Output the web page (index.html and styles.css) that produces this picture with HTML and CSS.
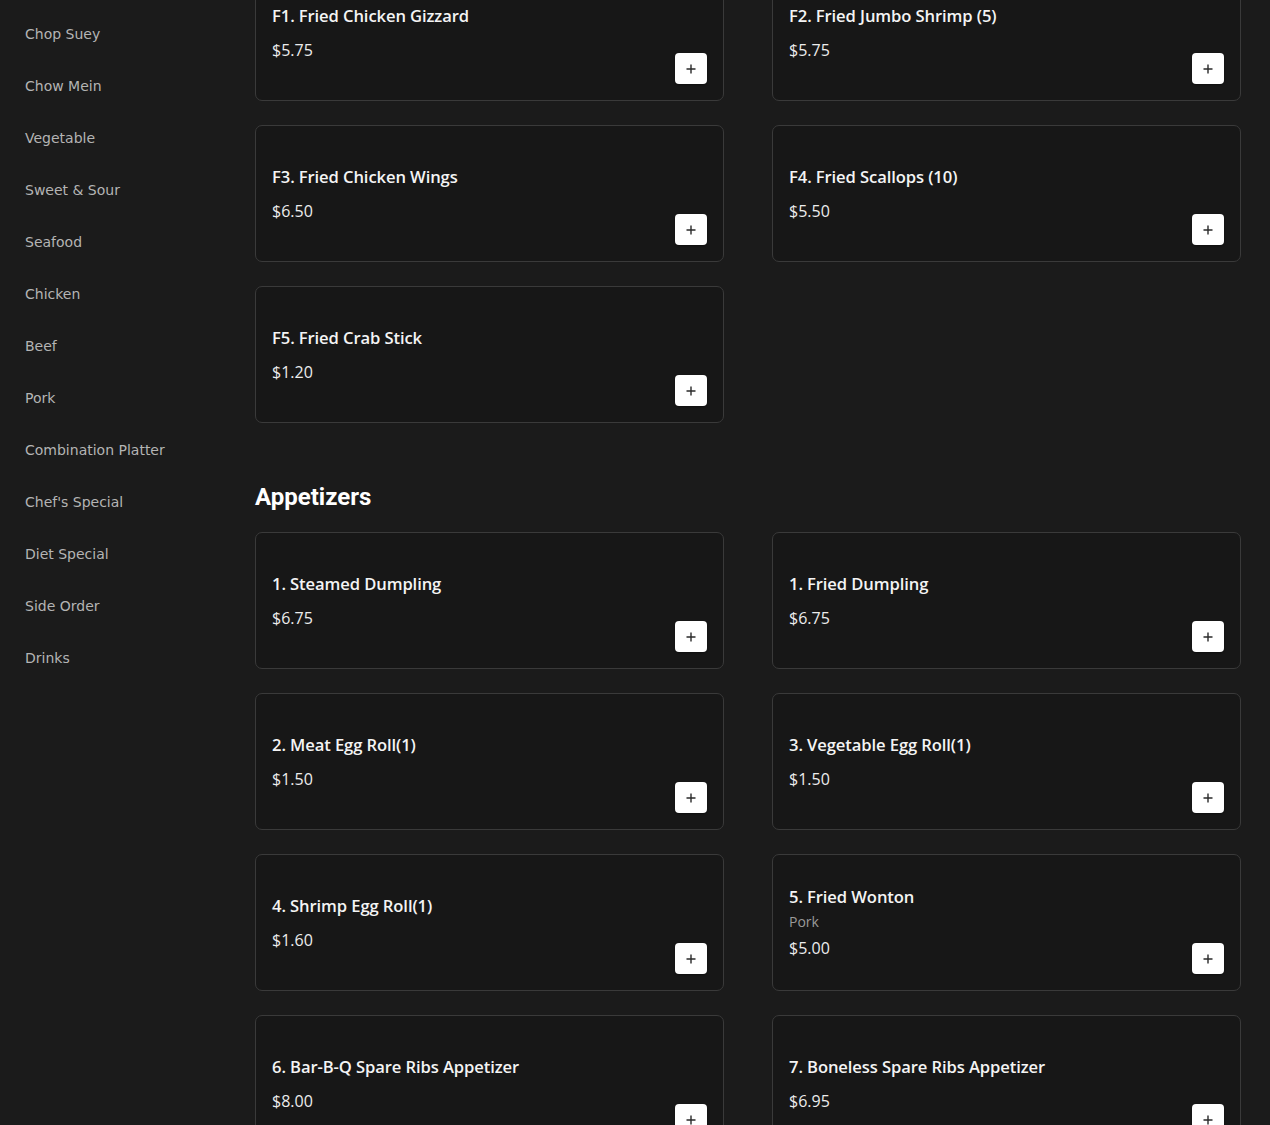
FILE: index.html
```html
<!DOCTYPE html>
<html>
<head>
<meta charset="utf-8">
<link rel="stylesheet" href="styles.css">
</head>
<body>
<div class="page">
  <nav class="sidebar">
    <a class="nav-item">Chop Suey</a>
    <a class="nav-item">Chow Mein</a>
    <a class="nav-item">Vegetable</a>
    <a class="nav-item">Sweet &amp; Sour</a>
    <a class="nav-item">Seafood</a>
    <a class="nav-item">Chicken</a>
    <a class="nav-item">Beef</a>
    <a class="nav-item">Pork</a>
    <a class="nav-item">Combination Platter</a>
    <a class="nav-item">Chef's Special</a>
    <a class="nav-item">Diet Special</a>
    <a class="nav-item">Side Order</a>
    <a class="nav-item">Drinks</a>
  </nav>
  <main class="content">
    <section class="section section-first">
      <div class="grid">
        <div class="card"><div class="info"><div class="title">F1. Fried Chicken Gizzard</div><div class="price">$5.75</div></div><button class="add"><svg width="10" height="10" viewBox="0 0 10 10"><path d="M5 0.5v9M0.5 5h9" stroke="#2a2a2a" stroke-width="1.4"/></svg></button></div>
        <div class="card"><div class="info"><div class="title">F2. Fried Jumbo Shrimp (5)</div><div class="price">$5.75</div></div><button class="add"><svg width="10" height="10" viewBox="0 0 10 10"><path d="M5 0.5v9M0.5 5h9" stroke="#2a2a2a" stroke-width="1.4"/></svg></button></div>
        <div class="card"><div class="info"><div class="title">F3. Fried Chicken Wings</div><div class="price">$6.50</div></div><button class="add"><svg width="10" height="10" viewBox="0 0 10 10"><path d="M5 0.5v9M0.5 5h9" stroke="#2a2a2a" stroke-width="1.4"/></svg></button></div>
        <div class="card"><div class="info"><div class="title">F4. Fried Scallops (10)</div><div class="price">$5.50</div></div><button class="add"><svg width="10" height="10" viewBox="0 0 10 10"><path d="M5 0.5v9M0.5 5h9" stroke="#2a2a2a" stroke-width="1.4"/></svg></button></div>
        <div class="card"><div class="info"><div class="title">F5. Fried Crab Stick</div><div class="price">$1.20</div></div><button class="add"><svg width="10" height="10" viewBox="0 0 10 10"><path d="M5 0.5v9M0.5 5h9" stroke="#2a2a2a" stroke-width="1.4"/></svg></button></div>
      </div>
    </section>
    <section class="section">
      <h2 class="section-title">Appetizers</h2>
      <div class="grid">
        <div class="card"><div class="info"><div class="title">1. Steamed Dumpling</div><div class="price">$6.75</div></div><button class="add"><svg width="10" height="10" viewBox="0 0 10 10"><path d="M5 0.5v9M0.5 5h9" stroke="#2a2a2a" stroke-width="1.4"/></svg></button></div>
        <div class="card"><div class="info"><div class="title">1. Fried Dumpling</div><div class="price">$6.75</div></div><button class="add"><svg width="10" height="10" viewBox="0 0 10 10"><path d="M5 0.5v9M0.5 5h9" stroke="#2a2a2a" stroke-width="1.4"/></svg></button></div>
        <div class="card"><div class="info"><div class="title">2. Meat Egg Roll(1)</div><div class="price">$1.50</div></div><button class="add"><svg width="10" height="10" viewBox="0 0 10 10"><path d="M5 0.5v9M0.5 5h9" stroke="#2a2a2a" stroke-width="1.4"/></svg></button></div>
        <div class="card"><div class="info"><div class="title">3. Vegetable Egg Roll(1)</div><div class="price">$1.50</div></div><button class="add"><svg width="10" height="10" viewBox="0 0 10 10"><path d="M5 0.5v9M0.5 5h9" stroke="#2a2a2a" stroke-width="1.4"/></svg></button></div>
        <div class="card"><div class="info"><div class="title">4. Shrimp Egg Roll(1)</div><div class="price">$1.60</div></div><button class="add"><svg width="10" height="10" viewBox="0 0 10 10"><path d="M5 0.5v9M0.5 5h9" stroke="#2a2a2a" stroke-width="1.4"/></svg></button></div>
        <div class="card"><div class="info"><div class="title">5. Fried Wonton</div><div class="desc">Pork</div><div class="price">$5.00</div></div><button class="add"><svg width="10" height="10" viewBox="0 0 10 10"><path d="M5 0.5v9M0.5 5h9" stroke="#2a2a2a" stroke-width="1.4"/></svg></button></div>
        <div class="card"><div class="info"><div class="title">6. Bar-B-Q Spare Ribs Appetizer</div><div class="price">$8.00</div></div><button class="add"><svg width="10" height="10" viewBox="0 0 10 10"><path d="M5 0.5v9M0.5 5h9" stroke="#2a2a2a" stroke-width="1.4"/></svg></button></div>
        <div class="card"><div class="info"><div class="title">7. Boneless Spare Ribs Appetizer</div><div class="price">$6.95</div></div><button class="add"><svg width="10" height="10" viewBox="0 0 10 10"><path d="M5 0.5v9M0.5 5h9" stroke="#2a2a2a" stroke-width="1.4"/></svg></button></div>
      </div>
    </section>
  </main>
</div>
</body>
</html>
```

FILE: styles.css
```css
html, body {
  margin: 0;
  padding: 0;
  background: #1b1b1b;
  height: 100%;
  overflow: hidden;
}

.page {
  display: flex;
  align-items: flex-start;
}

.sidebar {
  width: 255px;
  flex: 0 0 255px;
  padding-top: 8px;
  display: flex;
  flex-direction: column;
}

.nav-item {
  display: block;
  height: 52px;
  line-height: 52px;
  padding-left: 25px;
  font-family: "DejaVu Sans", Verdana, sans-serif;
  font-size: 14px;
  color: #b4b4b4;
}

.content {
  width: 986px;
  flex: 0 0 986px;
}

.section-first {
  margin-top: -36px;
}

.section-title {
  margin: 58px 0 19px;
  height: 32px;
  line-height: 32px;
  font-family: Roboto, "Liberation Sans", sans-serif;
  font-weight: 700;
  font-size: 24px;
  color: #ffffff;
}

.grid {
  display: grid;
  grid-template-columns: 469px 469px;
  column-gap: 48px;
  row-gap: 24px;
}

.card {
  box-sizing: border-box;
  height: 137px;
  border: 1px solid #3a3a3a;
  border-radius: 7px;
  background: #171717;
  padding: 16px;
  display: flex;
  justify-content: space-between;
  align-items: center;
}

.info {
  display: flex;
  flex-direction: column;
}

.title {
  font-family: "Open Sans", "Noto Sans", sans-serif;
  font-weight: 600;
  font-size: 16.6px;
  line-height: 24px;
  color: #f4f4f4;
  letter-spacing: -0.1px;
}

.desc {
  font-family: "Open Sans", "Noto Sans", sans-serif;
  font-size: 14px;
  line-height: 20px;
  color: #9a9a9a;
  margin: 3px 0 4px;
}

.price {
  font-family: "Open Sans", "Noto Sans", sans-serif;
  font-size: 16px;
  line-height: 24px;
  color: #ececec;
  margin-top: 10px;
}

.desc + .price {
  margin-top: 0;
}

.add {
  align-self: flex-end;
  width: 32px;
  height: 31px;
  padding: 0;
  border: none;
  border-radius: 4px;
  background: #ffffff;
  display: flex;
  align-items: center;
  justify-content: center;
  box-shadow: 0 1px 2px rgba(0, 0, 0, 0.4);
}
```
